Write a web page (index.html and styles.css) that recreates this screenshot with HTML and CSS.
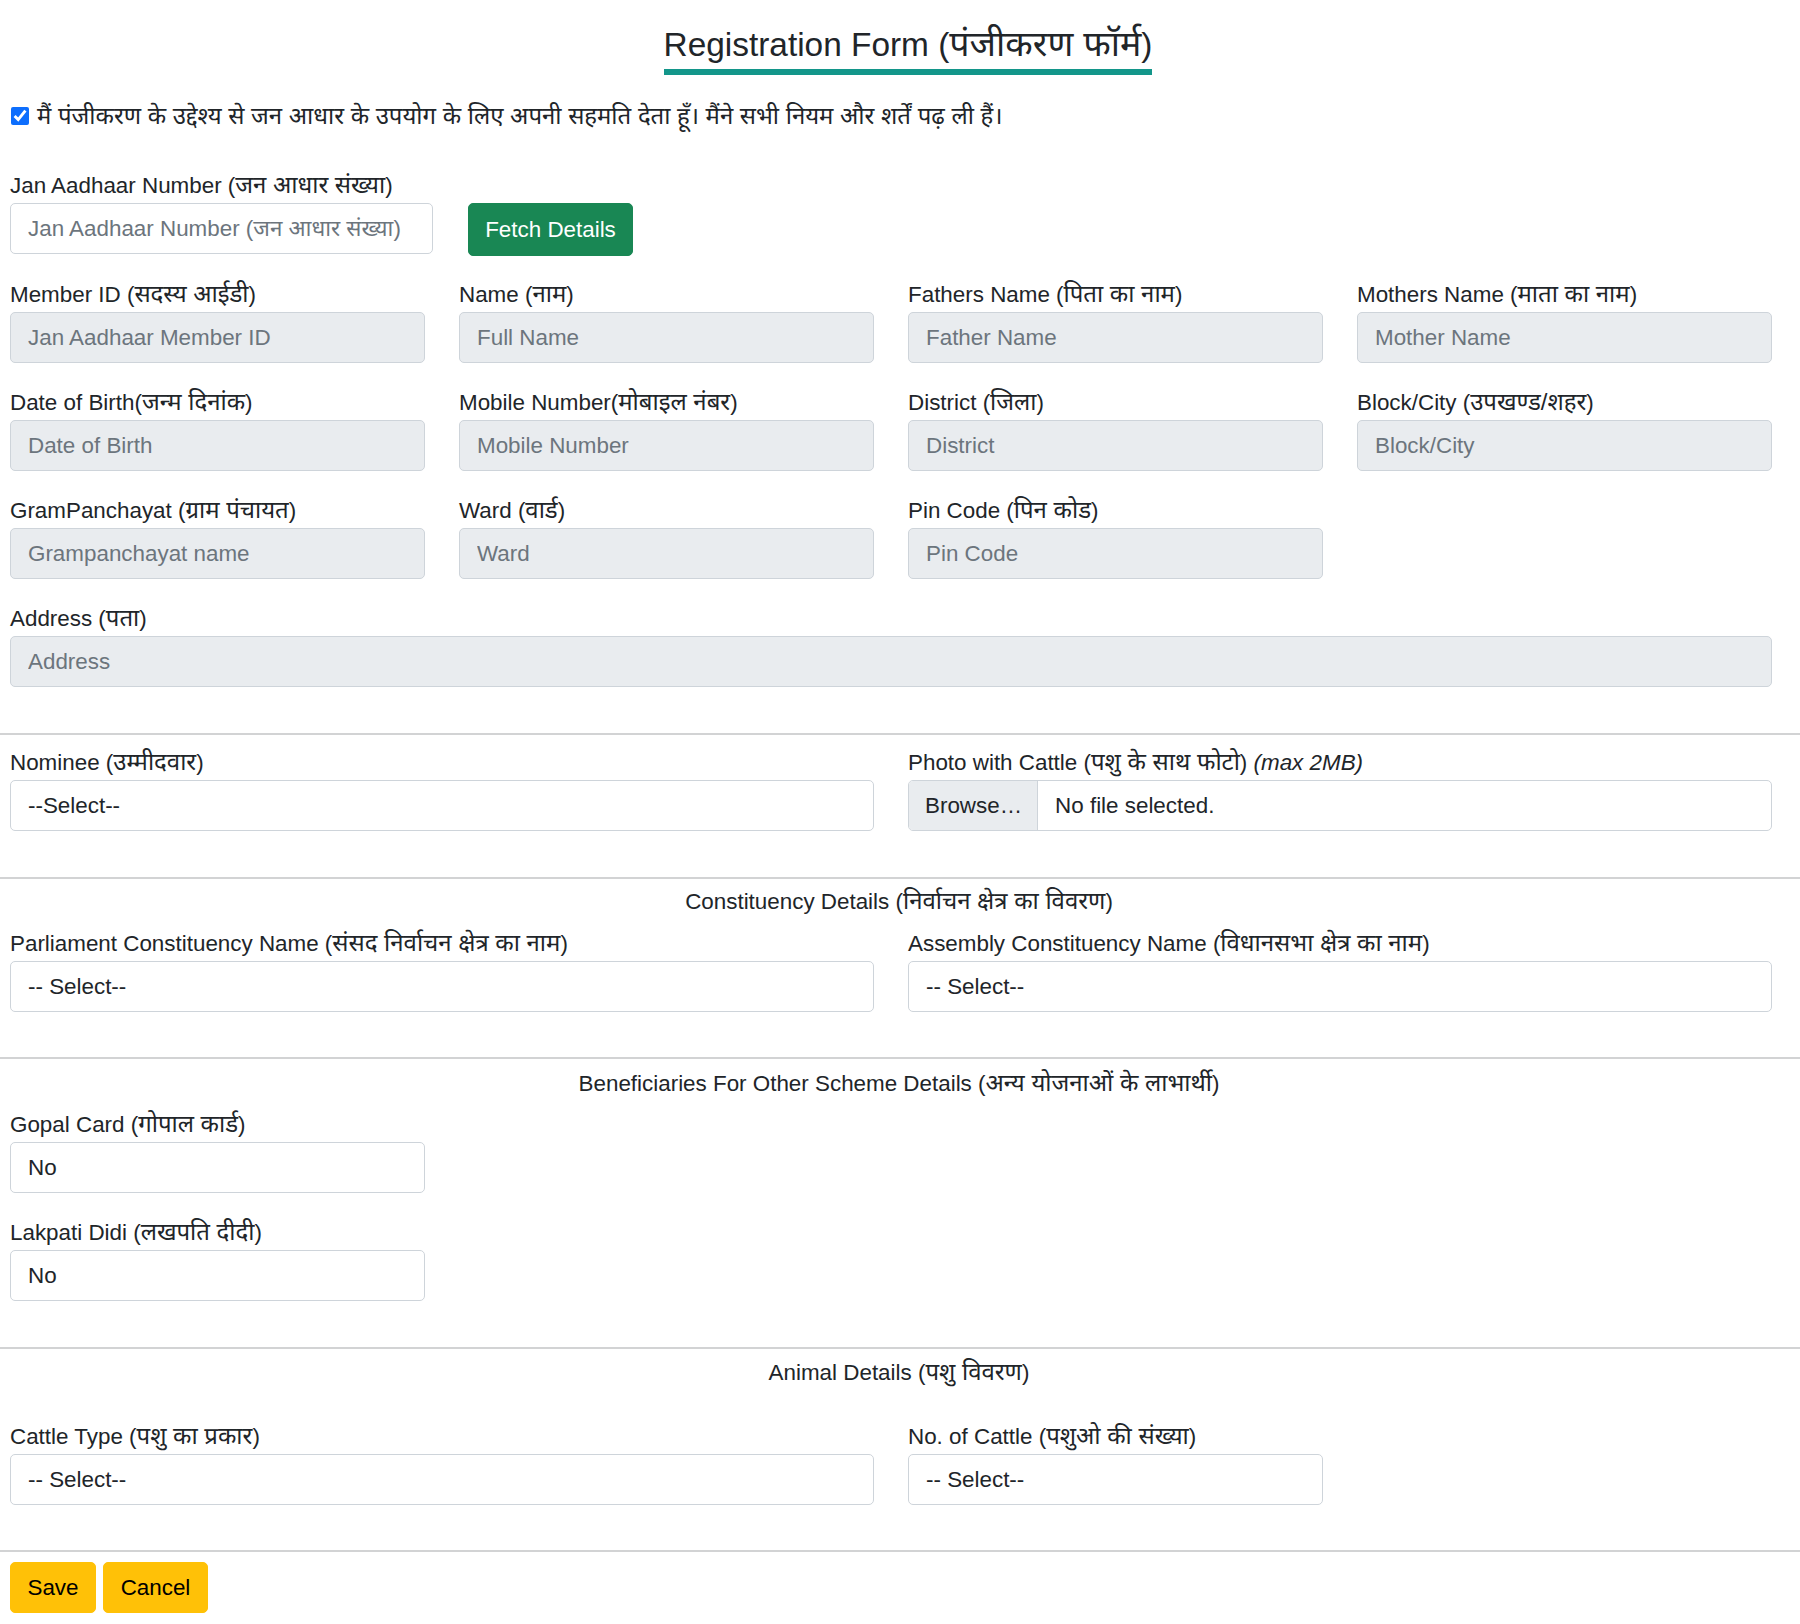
FILE: index.html
```html
<!DOCTYPE html>
<html lang="hi">
<head>
<meta charset="utf-8">
<title>Registration Form</title>
<link rel="stylesheet" href="styles.css">
</head>
<body>
<main class="page">
  <header class="title-wrap">
    <h2 class="title">Registration Form (<span class="dv">पंजीकरण फॉर्म</span>)</h2>
  </header>

  <section class="pad sec-main">
    <label class="consent">
      <input type="checkbox" class="check" checked>
      <span class="dv">मैं पंजीकरण के उद्देश्य से जन आधार के उपयोग के लिए अपनी सहमति देता हूँ। मैंने सभी नियम और शर्तें पढ़ ली हैं।</span>
    </label>

    <div class="jan">
      <label class="lbl">Jan Aadhaar Number (<span class="dv">जन आधार संख्या</span>)</label>
      <div class="jan-row">
        <input class="fc jan-input" type="text" placeholder="Jan Aadhaar Number (जन आधार संख्या)">
        <button class="btn btn-success" type="button">Fetch Details</button>
      </div>
    </div>

    <div class="grid">
      <div class="group"><label class="lbl">Member ID (<span class="dv">सदस्य आईडी</span>)</label><input class="fc ro" readonly placeholder="Jan Aadhaar Member ID"></div>
      <div class="group"><label class="lbl">Name (<span class="dv">नाम</span>)</label><input class="fc ro" readonly placeholder="Full Name"></div>
      <div class="group"><label class="lbl">Fathers Name (<span class="dv">पिता का नाम</span>)</label><input class="fc ro" readonly placeholder="Father Name"></div>
      <div class="group"><label class="lbl">Mothers Name (<span class="dv">माता का नाम</span>)</label><input class="fc ro" readonly placeholder="Mother Name"></div>

      <div class="group"><label class="lbl">Date of Birth(<span class="dv">जन्म दिनांक</span>)</label><input class="fc ro" readonly placeholder="Date of Birth"></div>
      <div class="group"><label class="lbl">Mobile Number(<span class="dv">मोबाइल नंबर</span>)</label><input class="fc ro" readonly placeholder="Mobile Number"></div>
      <div class="group"><label class="lbl">District (<span class="dv">जिला</span>)</label><input class="fc ro" readonly placeholder="District"></div>
      <div class="group"><label class="lbl">Block/City (<span class="dv">उपखण्ड/शहर</span>)</label><input class="fc ro" readonly placeholder="Block/City"></div>

      <div class="group"><label class="lbl">GramPanchayat (<span class="dv">ग्राम पंचायत</span>)</label><input class="fc ro" readonly placeholder="Grampanchayat name"></div>
      <div class="group"><label class="lbl">Ward (<span class="dv">वार्ड</span>)</label><input class="fc ro" readonly placeholder="Ward"></div>
      <div class="group"><label class="lbl">Pin Code (<span class="dv">पिन कोड</span>)</label><input class="fc ro" readonly placeholder="Pin Code"></div>
      <div class="group empty"></div>

      <div class="group span4"><label class="lbl">Address (<span class="dv">पता</span>)</label><input class="fc ro" readonly placeholder="Address"></div>
    </div>
  </section>

  <hr class="rule">

  <section class="pad sec-nominee">
    <div class="grid">
      <div class="group span2"><label class="lbl">Nominee (<span class="dv">उम्मीदवार</span>)</label><select class="fc sel"><option>--Select--</option></select></div>
      <div class="group span2">
        <label class="lbl">Photo with Cattle (<span class="dv">पशु के साथ फोटो</span>) <i>(max 2MB)</i></label>
        <div class="fc file"><span class="browse">Browse…</span><span class="fname">No file selected.</span></div>
      </div>
    </div>
  </section>

  <hr class="rule">

  <section class="pad sec-const">
    <h5 class="sec-title">Constituency Details (<span class="dv">निर्वाचन क्षेत्र का विवरण</span>)</h5>
    <div class="grid">
      <div class="group span2"><label class="lbl">Parliament Constituency Name (<span class="dv">संसद निर्वाचन क्षेत्र का नाम</span>)</label><select class="fc sel"><option>-- Select--</option></select></div>
      <div class="group span2"><label class="lbl">Assembly Constituency Name (<span class="dv">विधानसभा क्षेत्र का नाम</span>)</label><select class="fc sel"><option>-- Select--</option></select></div>
    </div>
  </section>

  <hr class="rule">

  <section class="pad sec-benef">
    <h5 class="sec-title">Beneficiaries For Other Scheme Details (<span class="dv">अन्य योजनाओं के लाभार्थी</span>)</h5>
    <div class="grid">
      <div class="group"><label class="lbl">Gopal Card (<span class="dv">गोपाल कार्ड</span>)</label><select class="fc sel"><option>No</option></select></div>
      <div class="group empty span3"></div>
      <div class="group"><label class="lbl">Lakpati Didi (<span class="dv">लखपति दीदी</span>)</label><select class="fc sel"><option>No</option></select></div>
    </div>
  </section>

  <hr class="rule">

  <section class="pad sec-animal">
    <h5 class="sec-title">Animal Details (<span class="dv">पशु विवरण</span>)</h5>
    <div class="grid">
      <div class="group span2"><label class="lbl">Cattle Type (<span class="dv">पशु का प्रकार</span>)</label><select class="fc sel"><option>-- Select--</option></select></div>
      <div class="group"><label class="lbl">No. of Cattle (<span class="dv">पशुओ की संख्या</span>)</label><select class="fc sel"><option>-- Select--</option></select></div>
    </div>
  </section>

  <hr class="rule">

  <section class="pad sec-actions">
    <div class="actions">
      <button class="btn btn-warning save" type="submit">Save</button>
      <button class="btn btn-warning cancel" type="button">Cancel</button>
    </div>
  </section>
</main>
</body>
</html>
```

FILE: styles.css
```css
* { box-sizing: border-box; }

body {
  margin: 0;
  background: #ffffff;
  color: #212529;
  font-family: "Liberation Sans", Arial, "Noto Sans", sans-serif;
  font-size: 22.4px;
  line-height: 1.5;
}

.page { width: 1800px; }

.dv { font-size: 1.07em; }

.title-wrap {
  height: 75px;
  padding: 25px 0 0 16px;
  text-align: center;
}

.title {
  display: inline-block;
  height: 50px;
  margin: 0;
  font-size: 33.4px;
  font-weight: 400;
  line-height: 38px;
  padding-bottom: 6px;
  border-bottom: 6px solid #13968a;
  color: #212529;
  white-space: nowrap;
}

.pad { padding: 0 28px 0 10px; }

.sec-main { padding-bottom: 46px; }
.sec-nominee { padding-top: 12px; padding-bottom: 46px; }
.sec-const { padding-top: 7px; padding-bottom: 45px; }
.sec-benef { padding-top: 9px; padding-bottom: 46px; }
.sec-animal { padding-top: 8px; padding-bottom: 45px; }
.sec-actions { padding-top: 10px; }

.consent {
  display: flex;
  align-items: center;
  height: 32px;
  margin-top: 25px;
  white-space: nowrap;
}

.check {
  width: 18px;
  height: 18px;
  margin: 0 8px 0 1px;
  accent-color: #0d6efd;
}

.jan { height: 86px; margin-top: 38px; margin-bottom: 23px; }

.jan-row {
  display: flex;
  align-items: flex-start;
  height: 53px;
  gap: 35px;
}

.lbl {
  display: block;
  height: 32px;
  line-height: 29px;
  margin-bottom: 1px;
  white-space: nowrap;
  overflow: visible;
}

.grid {
  display: grid;
  grid-template-columns: repeat(4, 1fr);
  grid-auto-rows: 84px;
  column-gap: 34px;
  row-gap: 24px;
}

.span2 { grid-column: span 2; }
.span3 { grid-column: span 3; }
.span4 { grid-column: span 4; }

.fc {
  display: block;
  width: 100%;
  height: 51px;
  margin: 0;
  padding: 0 17px;
  font: inherit;
  color: #212529;
  background: #ffffff;
  border: 1px solid #ced4da;
  border-radius: 5px;
  outline: none;
}

.jan-row .fc { width: 423px; }

.fc::placeholder { color: #6c757d; opacity: 1; }

.ro { background: #e9ecef; }

.sel {
  appearance: none;
  -webkit-appearance: none;
  background-image: none;
}

.file {
  display: flex;
  align-items: stretch;
  padding: 0;
  overflow: hidden;
}

.browse {
  display: flex;
  align-items: center;
  padding: 0 15px 0 16px;
  background: #e9ecef;
  border-right: 1px solid #ced4da;
}

.fname {
  display: flex;
  align-items: center;
  padding-left: 17px;
}

.sec-title {
  height: 30px;
  margin: 0 0 12px;
  padding-left: 16px;
  text-align: center;
  font-size: 22.4px;
  font-weight: 400;
  line-height: 30px;
  color: #212529;
  white-space: nowrap;
}

.sec-benef .sec-title { margin-bottom: 11px; }
.sec-animal .sec-title { margin-bottom: 34px; }

.rule {
  margin: 0;
  border: 0;
  height: 2px;
  background: #d2d3d4;
}

.btn {
  font: inherit;
  border: 1px solid transparent;
  border-radius: 5px;
  cursor: pointer;
  padding: 0;
}

.btn-success {
  width: 165px;
  height: 53px;
  background: #198754;
  border-color: #198754;
  color: #ffffff;
}

.actions {
  display: flex;
  gap: 7px;
}

.btn-warning {
  height: 51px;
  background: #ffc107;
  border-color: #ffc107;
  color: #000000;
}

.save { width: 86px; }
.cancel { width: 105px; }
```
